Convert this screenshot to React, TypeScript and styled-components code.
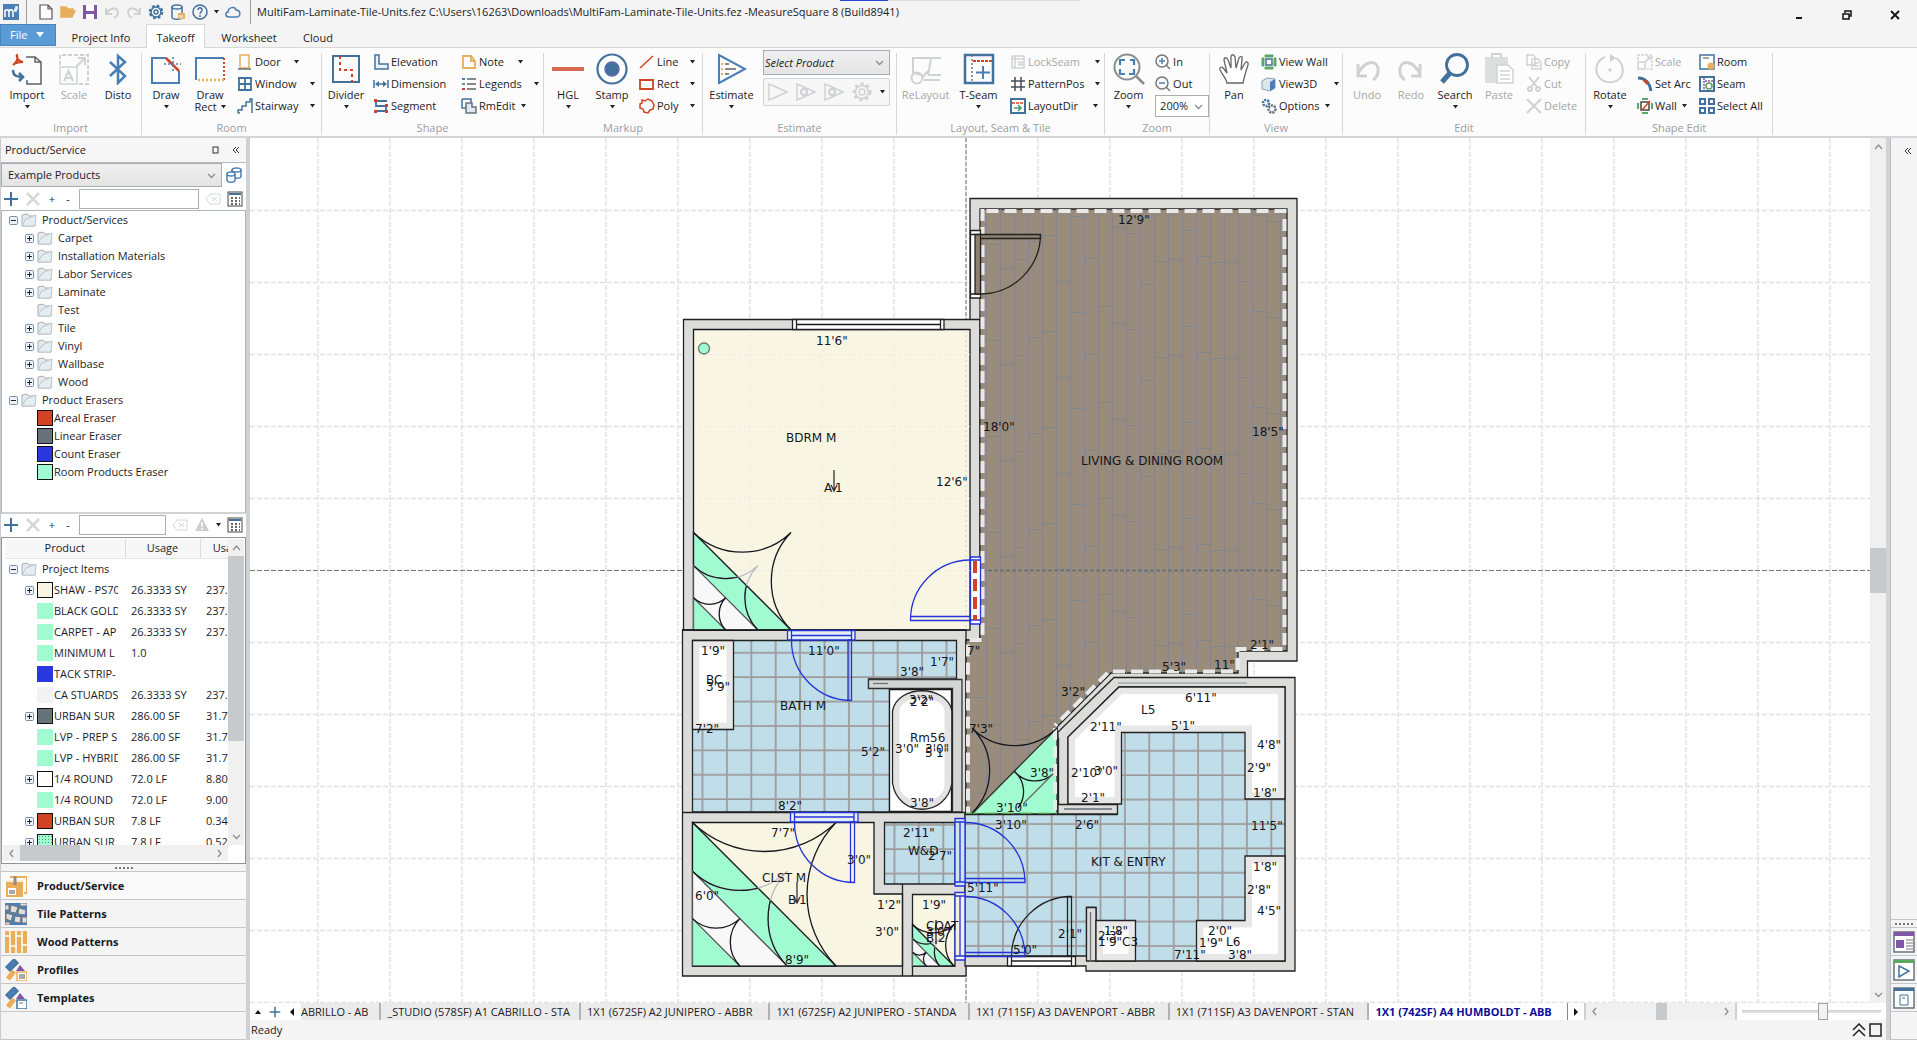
import React from "react";
import styled, { createGlobalStyle, css } from "styled-components";

const font = '"Open Sans", "Noto Sans", sans-serif';
const blue = "#4a7fb5";
const navy = "#41719c";
const sky = "#5b9bd5";
const orange = "#e8ae5c";
const red = "#d04423";
const slate = "#66737a";
const faded = "#cfd2d4";
const mint = "#a0fcd0";
const cream = "#f8f6e2";

const Global = createGlobalStyle`
  * { box-sizing: border-box; }
  body { margin: 0; font-family: ${font}; font-size: 11px; line-height: 16px; color: #1b1b1f; background: #f4f4f4; }
  button, input, select { font: inherit; color: inherit; margin: 0; padding: 0; }
  button { background: none; border: 0; white-space: nowrap; }
  svg { display: block; flex: none; }
`;

/* ---------- shell ---------- */
const Shell = styled.div`
  display: flex; flex-direction: column; height: 100vh; min-height: 700px; overflow: hidden; position: relative;
`;
const Progress = styled.div`
  position: absolute; top: 0; left: 50%; width: 240px; height: 1px; margin-left: -119px;
  background: linear-gradient(90deg, #2a45d8 48px, #dcdcdc 48px);
`;
const TitleBar = styled.header`
  display: flex; align-items: center; height: 24px; padding-left: 3px; flex: none;
`;
const QuickAccess = styled.div`
  display: flex; align-items: center; gap: 6px; height: 24px; padding: 0 9px 0 11px; margin: 0 6px 0 7px;
  border-left: 1px solid #999; border-right: 1px solid #999;
`;
const TitleText = styled.h1`
  font-size: 11px; font-weight: 400; margin: 0; flex: 1; white-space: nowrap;
`;
const WindowButtons = styled.div`
  display: flex; padding-top: 6px;
`;
const WindowButton = styled.button`
  width: 48px; display: flex; justify-content: center;
  &:last-child { margin-right: -2px; }
`;
const Tabs = styled.nav`
  display: flex; height: 24px; flex: none; border-bottom: 1px solid #d6d8da;
`;
const FileTab = styled.button`
  width: 56px; height: 22px; display: flex; align-items: center; gap: 9px; padding-left: 9px;
  color: #fff; background: ${sky}; border: 1px solid #4a83bd;
`;
const RibbonTab = styled.button<{ $w: number; $on?: boolean }>`
  width: ${p => p.$w}px; height: 24px; text-align: center; padding-top: 3px;
  ${p => p.$on && css`background: #fff; border: 1px solid #d6d8da; border-bottom: 0;`}
`;

/* ---------- ribbon ---------- */
const Ribbon = styled.div`
  display: flex; height: 90px; flex: none; background: #fcfcfc; border-bottom: 2px solid #d3d6d8; padding-top: 3px;
`;
const Group = styled.section<{ $w: number }>`
  width: ${p => p.$w}px; height: 82px; margin-top: 2px; border-right: 1px solid #d6d8da;
  display: flex; flex-direction: column;
`;
const GroupBody = styled.div`
  display: flex; height: 67px; padding-left: 2px;
`;
const GroupName = styled.div`
  height: 15px; text-align: center; color: #9a9ea0;
`;
const BigButton = styled.button<{ $w?: number; $off?: boolean }>`
  width: ${p => p.$w || 44}px; display: flex; flex-direction: column; align-items: center; line-height: 12px;
  color: ${p => (p.$off ? "#a5a8aa" : "inherit")};
  & > svg:first-child { margin-bottom: 4px; }
`;
const ArrowRow = styled.span`
  display: flex; align-items: center; gap: 4px; height: 12px;
`;
const Column = styled.div<{ $w?: number }>`
  display: flex; flex-direction: column; width: ${p => (p.$w ? p.$w + "px" : "auto")}; padding-left: 5px; margin-top: -2px;
`;
const SmallButton = styled.button<{ $off?: boolean }>`
  height: 22px; display: flex; align-items: center; gap: 2px;
  color: ${p => (p.$off ? "#a5a8aa" : "inherit")};
`;
const ButtonText = styled.span<{ $w?: number }>`
  min-width: ${p => p.$w || 0}px; text-align: left; margin-right: 3px;
`;
const EstimateTools = styled.div`
  display: flex; flex-direction: column; gap: 3px; margin: -3px 0 0 5px; width: 127px;
`;
const RunBox = styled.div`
  display: flex; align-items: center; justify-content: space-around; height: 28px; border: 1px solid #d0d3d5; border-radius: 2px; background: #f7f7f7;
`;
const SelectWrap = styled.label<{ $h: number; $w?: number; $grey?: boolean; $pad?: number }>`
  display: grid; align-items: center; height: ${p => p.$h}px; width: ${p => (p.$w ? p.$w + "px" : "auto")};
  border: 1px solid #a9adb1; background: ${p => (p.$grey ? "linear-gradient(#f0f0f0, #e4e4e4)" : "#fff")};
  & > select, & > svg { grid-area: 1 / 1; }
  & > svg { justify-self: end; margin-right: 5px; pointer-events: none; }
  & > select { appearance: none; border: 0; background: none; padding-left: ${p => p.$pad || 4}px; height: 100%; min-width: 0; outline: none; }
`;
const ItalicSelect = styled.select`font-style: italic;`;

/* ---------- body ---------- */
const Body = styled.div`
  display: grid; grid-template-columns: 250px minmax(0, 1fr) 27px; flex: 1; min-height: 0;
`;
const Sidebar = styled.aside`
  display: flex; flex-direction: column; min-height: 0; border-left: 1px solid #c8ccd0; border-right: 4px solid #ced2d5; background: #fff;
`;
const PanelHead = styled.div`
  display: flex; align-items: center; height: 25px; padding: 0 6px 0 4px; background: #f6f6f6; flex: none; gap: 12px;
  border-bottom: 1px solid #b4b9bd;
`;
const PanelName = styled.h2`font-size: 11px; font-weight: 400; margin: 0; flex: 1;`;
const ProductPick = styled.div`
  display: grid; grid-template-columns: 1fr 24px; height: 24px; flex: none; align-items: center; justify-items: stretch;
  & > svg { justify-self: center; }
`;
const Tools = styled.div`
  display: flex; align-items: center; height: 23px; padding: 0 3px 0 2px; gap: 6px; flex: none;
`;
const ToolButton = styled.button`min-width: 10px; line-height: 16px; display: flex; justify-content: center;`;
const FilterInput = styled.input`
  flex: 1; min-width: 0; height: 20px; border: 1px solid #aab0b5; background: #fff;
`;
const Tree = styled.ul`
  list-style: none; margin: 0; padding: 0; flex: 304 1 0; min-height: 0; overflow: hidden; border: 1px solid #aeb4b9; border-bottom: 2px solid #d0d3d5;
`;
const TreeRow = styled.li<{ $deep?: boolean }>`
  display: flex; align-items: center; height: 18px; padding-left: ${p => (p.$deep ? 23 : 7)}px; gap: 3px;
`;
const TreeText = styled.span<{ $tight?: boolean }>`margin-left: ${p => (p.$tight ? -2 : 2)}px; white-space: nowrap;`;
const Slot = styled.span`width: 9px; flex: none;`;
const Swatch = styled.span<{ $c: string; $line?: boolean; $dots?: boolean }>`
  width: 16px; height: 16px; flex: none; background-color: ${p => p.$c};
  border: ${p => (p.$line ? "1px solid #111" : "0")};
  ${p => p.$dots && css`background-image: radial-gradient(#4d9c78 25%, transparent 30%); background-size: 3px 3px;`}
`;
const GridBox = styled.div`
  display: grid; grid-template: minmax(0, 1fr) 16px / minmax(0, 1fr) 16px; flex: 326 1 0; min-height: 0;
  border: 1px solid #8f969b; padding: 1px 1px 2px 1px; overflow: hidden;
`;
const TableClip = styled.div`overflow: hidden; min-height: 0; padding-left: 2px;`;
const Items = styled.table`
  border-collapse: collapse; table-layout: fixed; width: 261px;
  th { font-weight: 400; height: 20px; padding: 0; background: #f7f7f7; border-right: 1px solid #dcdcdc; border-bottom: 1px solid #e6e6e6; }
  td { height: 21px; padding: 0 6px; overflow: hidden; white-space: pre; }
  td:first-child { padding: 0 7px 0 3px; }
`;
const Col = styled.col<{ $w: number }>`width: ${p => p.$w}px;`;
const ItemCell = styled.div<{ $deep?: boolean }>`
  display: flex; align-items: center; gap: 3px; padding-left: ${p => (p.$deep ? 17 : 1)}px; overflow: hidden;
`;
const Bar = styled.div<{ $upright?: boolean }>`
  display: flex; flex-direction: ${p => (p.$upright ? "column" : "row")}; background: #f0f0f0; min-width: 0; min-height: 0;
`;
const BarEnd = styled.span`flex: 0 0 17px; display: flex; align-items: center; justify-content: center; align-self: stretch;`;
const BarTrack = styled.span<{ $grow: number }>`flex: ${p => p.$grow} 1 0;`;
const BarThumb = styled.span<{ $grow: number }>`flex: ${p => p.$grow} 1 0; background: #c7cacd;`;
const Grip = styled.div`
  height: 7px; display: flex; gap: 2px; justify-content: center; align-items: center; flex: none; background: #f4f4f4;
  & > i { width: 2px; height: 2px; background: #777; }
`;
const NavButton = styled.button`
  display: flex; align-items: center; gap: 10px; height: 28px; padding-left: 4px; font-weight: 700; flex: none;
  border-top: 1px solid #c3c7ca; background: #f4f4f4; text-align: left;
  &:first-of-type { background: #fafafa; }
`;
const SideFoot = styled.div`height: 29px; flex: none; background: #f4f4f4; border-top: 1px solid #c3c7ca; border-bottom: 1px solid #c3c7ca;`;

const Work = styled.main`display: flex; flex-direction: column; min-width: 0; min-height: 0;`;
const CanvasRow = styled.div`display: flex; flex: 1; min-height: 0; background: #fff; border-right: 4px solid #d0d4d7;`;
const CanvasBox = styled.div`flex: 1; min-width: 0; overflow: hidden;`;
const CanvasBar = styled(Bar)`width: 16px;`;
const SheetRow = styled.div`display: flex; height: 17px; flex: none; background: #fff; border-right: 4px solid #d0d4d7;`;
const SheetTools = styled.div`display: flex; align-items: center; gap: 7px; width: 51px; padding-left: 4px;`;
const Sheets = styled.div`display: flex; flex: 1; min-width: 0;`;
const Sheet = styled.button<{ $grow: number; $on?: boolean }>`
  flex: ${p => p.$grow} 1 0; min-width: 0; padding: 0 6px; text-align: left; line-height: 17px; border-right: 2px solid #aeb3b7;
  background: ${p => (p.$on ? "#fff" : "#ebebeb")};
  & > span { display: block; overflow: hidden; }
  ${p => p.$on && css`color: #0c0c96; font-weight: 700; border-right: 1px solid #888;`}
  &:first-child { padding-left: 0; }
`;
const NextSheet = styled.button`width: 16px; display: flex; align-items: center; justify-content: center;`;
const SheetBar = styled(Bar)`width: 153px; border-left: 2px solid #d0d0d0; border-right: 2px solid #d0d0d0;`;
const SlideBox = styled.label`width: 149px; padding: 0 5px; display: flex; align-items: center;`;
const Slide = styled.input`
  appearance: none; width: 100%; height: 17px; background: linear-gradient(transparent 7px, #cfcfcf 7px, #e6e6e6 10px, transparent 10px);
  &::-webkit-slider-thumb { appearance: none; width: 10px; height: 17px; background: #f2f2f2; border: 1px solid #a0a0a0; }
`;
const Status = styled.footer`
  display: flex; align-items: center; height: 20px; flex: none; padding: 0 3px 0 1px; gap: 3px; background: #f4f4f4; justify-content: space-between;
  border-right: 4px solid #d0d4d7;
`;
const StatusTools = styled.div`display: flex; gap: 3px;`;
const RightRail = styled.aside`
  display: flex; flex-direction: column; background: #f4f4f4; border-left: 1px solid #b9bec2;
`;
const RailHead = styled.button`height: 25px; display: flex; align-items: center; justify-content: center; padding-left: 8px;`;
const RailSpace = styled.div`flex: 1; border-bottom: 1px solid #c3c7ca;`;
const RailButton = styled.button`height: 28px; border-top: 1px solid #c3c7ca; display: flex; align-items: center; justify-content: center;`;
const RailFoot = styled.div`height: 29px; border-top: 1px solid #c3c7ca; border-bottom: 1px solid #c3c7ca;`;

/* ---------- icons ---------- */
const Svg = ({ s = 16, v, h, children }: { s?: number; v?: number; h?: number; children: React.ReactNode }) => (
  <svg width={s} height={h || s} viewBox={`0 0 ${v || s} ${h || v || s}`} fill="none" stroke={navy} strokeWidth="1.5" aria-hidden="true">{children}</svg>
);
const Down = () => <svg width="5" height="4" viewBox="0 0 5 4" aria-hidden="true"><path d="M0 0H5L2.5 3.5Z" fill="#222" /></svg>;
const Chev = ({ d = "down" }: { d?: string }) => {
  const paths: Record<string, string> = { down: "M1 3L4.500 6.500L8 3", up: "M1 7L4.500 3L8 7", left: "M6 1L3 4.500L6 8", right: "M3 1L6 4.500L3 8" };
  return <svg width="9" height="9" viewBox="0 0 9 9" fill="none" stroke="#8a8e91" strokeWidth="1.300" aria-hidden="true"><path d={paths[d]} /></svg>;
};

const Big: Record<string, React.ReactNode> = {
  import: <><path d="M16 27V31H30V9L24 4H15M24 4V9H30" stroke="#5c6166" /><path d="M2 12C6 9 7 5 6 2C5 2 6 8 12 9C9 9 5 9 2 12Z" stroke={red} strokeWidth="2" /><path d="M2 17C2 23 6 24 12 24M8 20L12 24L8 28" stroke={navy} strokeWidth="2.500" /></>,
  scale: <g stroke={faded}><path d="M2 12V2H30V31H20" strokeDasharray="4 2" strokeWidth="2" /><rect x="2" y="14" width="17" height="17" /><path d="M6 28L10.500 18L15 28M8 25H13M18 14L27 5M20 5H27V12" strokeWidth="2" /></g>,
  bluetooth: <path d="M8 9L23 23L16 30V3L23 9L8 23" stroke={blue} strokeWidth="2.500" />,
  draw: <><path d="M16 5H2V30H29V18" stroke={blue} strokeWidth="2" /><path d="M16 5L29 18" stroke={red} strokeWidth="2.500" /><path d="M23 4V18M14 11H31" stroke={blue} strokeDasharray="2 2" /></>,
  drawrect: <><path d="M2 27V5H30" stroke={blue} strokeWidth="2" /><path d="M30 5V27" stroke={red} strokeWidth="2" strokeDasharray="2 2" /><path d="M30 27H2" stroke={orange} strokeWidth="2.500" strokeDasharray="2 2" /></>,
  divider: <><path d="M3 3H29V29H3Z" stroke={navy} strokeWidth="2" /><path d="M10 3V17H22V29" stroke={red} strokeWidth="2" strokeDasharray="3 3" /></>,
  hgl: <path d="M0 16H32" stroke={red} strokeWidth="4" opacity=".8" />,
  stamp: <><circle cx="16" cy="16" r="14.500" stroke={navy} strokeWidth="2.200" /><circle cx="16" cy="16" r="7" fill={navy} stroke="#5c6bb0" /></>,
  estimate: <><path d="M3 2V30L29 16Z" stroke={blue} strokeWidth="2" /><path d="M9 11H13M9 16H20M9 21H13" stroke="#888" strokeWidth="2" /><path d="M5 11H7M5 16H7M5 21H7" stroke={orange} strokeWidth="2" /></>,
  relayout: <g stroke={faded} strokeWidth="2"><path d="M3 20V5H31M21 5C20 12 19 17 18 22M18 22H31" /><circle cx="7" cy="25" r="5.500" /><path d="M12 25L18 18M3 20L12 22M30 27H14" /></g>,
  tseam: <><rect x="2" y="2" width="28" height="28" stroke={navy} strokeWidth="2.500" /><path d="M9 2V30" stroke="#777" strokeDasharray="2 2" /><path d="M10 8H29" stroke={red} strokeDasharray="3 1" strokeWidth="2" /><path d="M20 13V26M13 19.500H27" stroke={blue} strokeWidth="2" /></>,
  zoom: <><circle cx="14" cy="14" r="12.500" stroke="#888d90" strokeWidth="2" /><path d="M23 23L31 31" stroke="#888d90" strokeWidth="2.500" /><path d="M7 12V7H12M17 7H21V12M21 16V21H16M12 21H7V16" stroke={blue} strokeWidth="2.200" /></>,
  pan: <path d="M9 30C8 25 4 21 2 17C1 14 4 13 6 16L9 20L6 7C6 4 9 4 10 7L13 15L13 4C13 1 16 1 17 4L18 15L21 5C22 3 25 3 24 6L23 17L27 10C28 8 31 9 30 12C28 18 26 25 25 30Z" stroke="#666" strokeWidth="1.300" fill="#fff" />,
  undo: <path d="M7 11V23H16M7 21C14 7 25 7 27 15C28 21 25 25 22 27" stroke={faded} strokeWidth="3" />,
  redo: <path d="M25 11V23H16M25 21C18 7 7 7 5 15C4 21 7 25 10 27" stroke={faded} strokeWidth="3" />,
  search: <><circle cx="18" cy="12" r="10.500" stroke={navy} strokeWidth="2.800" /><path d="M11 20L3 29" stroke={navy} strokeWidth="5" /></>,
  paste: <><path d="M2 4H25V30H2Z" fill="#dcdedf" stroke="none" /><path d="M9 5V1H18V5" stroke={faded} strokeWidth="2" /><path d="M14 12H25L30 17V30H14Z" fill="#fff" stroke={faded} /><path d="M17 18H27M17 22H27M17 26H27" stroke={faded} /></>,
  rotate: <><path d="M11 4C2 8 0 17 5 24C10 31 22 31 27 24C31 17 28 9 22 5" stroke={faded} strokeWidth="2" /><path d="M16 1V9L22 5Z" fill={faded} stroke="none" /><circle cx="16" cy="17" r="1" stroke={faded} /></>,
};
const Small: Record<string, React.ReactNode> = {
  door: <><rect x="3" y="1" width="9" height="13" stroke={orange} /><path d="M1 15H14" stroke={slate} /></>,
  window: <path d="M2 2H14V14H2ZM8 2V14M2 8H14" strokeWidth="1.800" />,
  stairs: <path d="M1 15V12H5V8H9V4H13V1H15V15M3 15H1" />,
  elev: <path d="M2 1H6V10H15V15H2Z" fill="#e8f1f8" />,
  dim: <><path d="M1 4V12M15 4V12M6 8H10" /><path d="M2 8L6 5V11ZM14 8L10 5V11Z" fill={navy} stroke="none" /></>,
  seg: <><path d="M3 3H14M3 3V8H13V13H3" strokeWidth="1.800" /><path d="M1 1H4V4H1ZM12 6H15V9H12ZM1 12H4V15H1ZM12 12H15V15H12Z" fill={red} stroke="none" /></>,
  note: <path d="M2 2H10L14 7V14H2ZM10 2V7H14" stroke={orange} strokeWidth="1.800" />,
  legends: <><path d="M6 3H15M6 8H15M6 13H15" stroke="#888" strokeWidth="2" /><path d="M1 2H4V4H1Z" fill={blue} stroke="none" /><path d="M1 7H4V9H1Z" fill="#58a860" stroke="none" /><path d="M1 12H4V14H1Z" fill={red} stroke="none" /></>,
  rmedit: <><path d="M1 1H10V5M5 10H1V1" /><path d="M5 5H11V9H15V15H5Z" stroke={slate} fill="#dfe8ee" /></>,
  line: <path d="M1 14L14 2" stroke={red} />,
  rect: <path d="M1 4H14V13H1Z" stroke={red} strokeWidth="1.800" />,
  poly: <path d="M3 2L6 3L9 1L13 3L15 7L14 11L11 12L9 15L5 14L4 11L1 10L1 6L3 5Z" stroke={red} />,
  lock: <><path d="M2 2H14V14H2ZM2 5H14M5 2V14M9 8H12V11H9Z" stroke={faded} /></>,
  hash: <path d="M5 1V15M11 1V15M1 5H15M1 11H15" stroke="#444e58" />,
  layoutdir: <><rect x="1" y="1" width="14" height="14" strokeWidth="2" /><path d="M2 5H14" stroke={red} strokeDasharray="3 1" /><path d="M4 10H10M8 7L11 10L8 13" stroke="#469a68" /></>,
  zin: <><circle cx="7" cy="7" r="6" stroke="#777" /><path d="M11 11L15 15" stroke="#777" /><path d="M4 7H10M7 4V10" stroke={blue} /></>,
  zout: <><circle cx="7" cy="7" r="6" stroke="#777" /><path d="M11 11L15 15" stroke="#777" /><path d="M4 7H10" stroke={blue} /></>,
  vwall: <><rect x="5" y="5" width="6" height="6" /><path d="M4 1H12V3H4ZM4 13H12V15H4ZM1 4H3V12H1ZM13 4H15V12H13Z" fill="#5aa864" stroke="#5aa864" strokeWidth="1" /></>,
  v3d: <><path d="M1 5L6 2L14 3V12L9 15L1 13Z" fill="#dbe6ef" stroke="#8ba0b1" strokeWidth="1" /><path d="M9 6L14 3V12L9 15Z" fill={blue} stroke="none" /></>,
  gears: <><circle cx="5" cy="5" r="3" strokeDasharray="2 1" strokeWidth="2.500" /><circle cx="11" cy="11" r="3.500" stroke="#5c6a78" strokeDasharray="2 1" strokeWidth="2.500" /></>,
  copy: <g stroke={faded}><path d="M1 1H7L9 3V11H1ZM6 5H12L15 8V15H6Z" fill="#fff" /><path d="M8 9H13M8 12H13" /></g>,
  cut: <g stroke={faded} strokeWidth="2"><path d="M3 1L11 11M13 1L5 11" /><circle cx="4" cy="13" r="2" /><circle cx="12" cy="13" r="2" /></g>,
  del: <path d="M1 1L15 15M15 1L1 15" stroke={faded} strokeWidth="2" />,
  scale: <g stroke={faded}><path d="M1 6V1H15V15H10" strokeDasharray="3 1" /><path d="M1 8H8V15H1ZM8 8L13 3M10 3H13V6" /></g>,
  arc: <><path d="M1 2C9 2 13 8 14 15" strokeWidth="3" /><path d="M7 4L11 8" stroke={red} strokeWidth="3" /></>,
  wall: <><path d="M4 4H12V12H4Z" stroke="#444" /><path d="M5 1H11M5 15H11M1 5V11M15 5V11" stroke="#5aa864" strokeWidth="2" /><path d="M5 12L13 3" stroke={red} /></>,
  room: <><path d="M1 1H15V15H1Z" strokeWidth="1.500" fill="#fff" /><path d="M4 4H10" stroke="#888" /><circle cx="12" cy="12" r="3.500" fill={orange} stroke="none" /></>,
  seam: <><path d="M1 1H15V15H1Z" strokeWidth="2" /><path d="M5 2V14M6 5H14" stroke="#8156a6" strokeDasharray="2 1" /><circle cx="10" cy="10" r="3" stroke="#5aa864" /></>,
  all: <path d="M1 1H6V6H1ZM10 1H15V6H10ZM1 10H6V15H1ZM10 10H15V15H10Z" strokeWidth="2" />,
  plus: <path d="M8 1V15M1 8H15" strokeWidth="2" />,
  x: <path d="M2 2L14 14M14 2L2 14" stroke="#d5d7d8" strokeWidth="2.500" />,
  clear: <path d="M1 8L5 3H15V13H5ZM7 6L12 10M12 6L7 10" stroke="#d5d7d8" strokeWidth="1" />,
  warn: <><path d="M8 1L15 14H1Z" fill="#cbcdce" stroke="none" /><path d="M8 5V10M8 11V13" stroke="#fff" /></>,
  table: <><rect x="1" y="1" width="14" height="14" stroke="#444" strokeWidth="1" /><path d="M2 3H14" stroke={navy} strokeWidth="2" /><path d="M4 7H13M4 10H13M4 13H13" stroke="#333" strokeDasharray="2 2" /></>,
  dbs: <g stroke={blue} fill="#fff" strokeWidth="1.500"><path d="M6 3V9C6 12 15 12 15 9V3" /><ellipse cx="10.500" cy="3" rx="4.500" ry="2" /><path d="M1 7V13C1 16 9 16 9 13V7" /><ellipse cx="5" cy="7" rx="4" ry="2" /></g>,
  folder: <><path d="M1 14V3L6 2L8 4H14V14Z" fill="#e6eaec" stroke="#a9aeb2" strokeWidth="1" /><path d="M1 14L5 7L15 3L14 14Z" fill="#e3edf2" stroke="#bcc6cc" strokeWidth="1" /></>,
  file: <path d="M2 1H10L14 5V15H2ZM10 1V5H14" stroke="#555" strokeWidth="1.200" fill="#fff" />,
  open: <path d="M1 13V3H6L8 5H13V7M1 13L4 7H15L12 13Z" fill={orange} stroke={orange} />,
  save: <><path d="M1 1H15V15H1Z" fill="#8156a6" stroke="none" /><path d="M4 1H12V7H4ZM4 10H12V15H4Z" fill="#fff" stroke="none" /></>,
  undo: <path d="M2 4V10H8M2 10C6 3 13 3 14 8C14 11 12 13 10 14" stroke={faded} strokeWidth="2" />,
  redo: <path d="M14 4V10H8M14 10C10 3 3 3 2 8C2 11 4 13 6 14" stroke={faded} strokeWidth="2" />,
  gear: <><circle cx="8" cy="8" r="6" strokeDasharray="2.700 2" strokeWidth="2.500" /><circle cx="8" cy="8" r="5" /><circle cx="8" cy="8" r="2" /></>,
  db: <><path d="M2 3V13C2 16 12 16 12 13V3" /><ellipse cx="7" cy="3" rx="5" ry="2" /><path d="M8 9H15V15H8Z" fill={orange} stroke="none" /><path d="M10 11V14M12 11V14" stroke="#fff" strokeWidth="1" /></>,
  help: <><circle cx="8" cy="8" r="7" /><path d="M6 6C6 3 10 3 10 6C10 8 8 8 8 10M8 11V13" /></>,
  cloud: <path d="M4 13C0 13 0 8 3 8C3 3 10 2 11 6C16 6 16 13 12 13Z" stroke={blue} />,
};
const I = ({ n, s = 16 }: { n: string; s?: number }) => <Svg s={s} v={16}>{Small[n]}</Svg>;
const L = ({ n }: { n: string }) => <Svg s={32}>{Big[n]}</Svg>;
const Expander = ({ open }: { open?: boolean }) => (
  <svg width="9" height="9" viewBox="0 0 9 9" fill="#eef4fb" stroke="#7c8fa8" aria-hidden="true">
    <rect x=".5" y=".5" width="8" height="8" rx="1" /><path d={open ? "M2 4.500H7" : "M2 4.500H7M4.500 2V7"} stroke="#222" />
  </svg>
);
const Navs: [string, React.ReactNode][] = [
  ["Product/Service", <><path d="M5 2H22V18H19" stroke={orange} strokeWidth="2" /><path d="M1 5H18V22H1Z" fill={orange} stroke="none" /><path d="M1 6H19" stroke="#fff" /><path d="M10 1V10" stroke="#9a8a7a" strokeWidth="3" /><path d="M3 13H11V20H3Z" fill="#fff" stroke="none" /><path d="M5 15V19M7 15V19M9 15V19" stroke="#555" strokeWidth="1" /></>],
  ["Tile Patterns", <><path d="M0 0H22V22H0Z" fill={blue} stroke="none" /><path d="M6 2L13 4L11 10L5 9ZM14 5L21 7L20 12L13 11ZM1 10L8 12L6 18L1 16ZM10 13L16 14L15 20L9 19ZM17 14H22V20H17ZM0 2H4V7H0ZM0 19H5V22H0ZM15 0H22V3H15Z" fill="#dcdedf" stroke="#777" strokeWidth="1" /></>],
  ["Wood Patterns", <><path d="M0 0H22V22H0Z" fill={orange} stroke="none" /><path d="M5 0V22M11 0V22M17 0V22M0 5H5M5 15H11M11 5H17M17 14H22" stroke="#fff" /></>],
  ["Profiles", <><path d="M1 8L9 0L13 4L5 12Z" fill={blue} stroke={navy} /><path d="M11 12L15 6L20 12Z" fill="#8156a6" stroke="none" /><path d="M3 20L9 12" stroke={orange} strokeWidth="5" /><path d="M12 13H22V22H12Z" fill="#fff" stroke={orange} /><path d="M15 15V20M17 15V20M19 15V20" stroke="#555" strokeWidth="1" /></>],
  ["Templates", <><path d="M1 8L9 0L13 4L5 12Z" fill={blue} stroke={navy} /><path d="M11 12L15 6L20 12Z" fill="#8156a6" stroke="none" /><path d="M3 20L9 12" stroke={orange} strokeWidth="5" /><path d="M12 13H22V22H12Z" fill="#fff" stroke={navy} /><path d="M14 16H18" stroke="#777" strokeWidth="1" /></>],
];

/* ---------- ribbon pieces ---------- */
const BigB = ({ n, t, w, off, arrow, t2 }: { n: string; t: string; w?: number; off?: boolean; arrow?: boolean; t2?: string }) => (
  <BigButton $w={w} $off={off}>
    <L n={n} /><span>{t}</span>
    {(arrow || t2) && <ArrowRow>{t2}<Down /></ArrowRow>}
  </BigButton>
);
const SmallB = ({ n, t, w, off, arrow }: { n: string; t: string; w?: number; off?: boolean; arrow?: boolean }) => (
  <SmallButton $off={off}><I n={n} /><ButtonText $w={w}>{t}</ButtonText>{arrow && <Down />}</SmallButton>
);

/* ---------- floor plan ---------- */
const PlanText = styled.text`font-family: "DejaVu Sans", sans-serif; font-size: 12px; fill: #15151c; stroke: none;`;
const labels: [string, number, number][] = [
  ["11'6\"", 816, 341], ["BDRM M", 786, 438], ["A", 824, 488], ["1", 835, 488], ["12'6\"", 936, 482],
  ["1'9\"", 701, 651], ["BC", 706, 680], ["3'9\"", 706, 687], ["11'0\"", 808, 651], ["1'7\"", 930, 662], ["3'8\"", 900, 672],
  ["BATH M", 780, 706], ["7'2\"", 695, 729], ["5'2\"", 861, 752], ["8'2\"", 778, 806], ["3'2\"", 909, 700], ["2'2\"", 910, 702],
  ["Rm56", 910, 738], ["3'0\"", 895, 749], ["3'0\"", 925, 749], ["5'1\"", 925, 753], ["3'8\"", 910, 803], ["7'7\"", 771, 833],
  ["2'11\"", 903, 833], ["W&D", 908, 851], ["2'7\"", 928, 856], ["3'0\"", 847, 860], ["CLST M", 762, 878], ["6'0\"", 695, 896],
  ["B", 788, 900], ["1", 799, 900], ["1'2\"", 877, 905], ["1'9\"", 922, 905], ["3'0\"", 875, 932], ["COAT", 926, 926],
  ["3'0\"", 926, 932], ["B 2", 926, 938], ["8'9\"", 785, 960], ["7\"", 967, 651], ["12'9\"", 1118, 220], ["18'0\"", 983, 427],
  ["18'5\"", 1252, 432], ["LIVING & DINING ROOM", 1081, 461], ["2'1\"", 1250, 645], ["5'3\"", 1162, 667], ["11\"", 1214, 665],
  ["3'2\"", 1061, 692], ["6'11\"", 1185, 698], ["L5", 1141, 710], ["2'11\"", 1090, 727], ["5'1\"", 1171, 726], ["7'3\"", 969, 729],
  ["4'8\"", 1257, 745], ["2'9\"", 1247, 768], ["2'10\"", 1071, 773], ["3'0\"", 1094, 771], ["3'8\"", 1030, 773], ["1'8\"", 1253, 793],
  ["2'1\"", 1081, 798], ["3'10\"", 996, 808], ["3'10\"", 995, 825], ["2'6\"", 1075, 825], ["11'5\"", 1251, 826], ["KIT & ENTRY", 1091, 862],
  ["1'8\"", 1253, 867], ["5'11\"", 967, 888], ["2'8\"", 1247, 890], ["4'5\"", 1257, 911], ["2'1\"", 1058, 934], ["1'8\"", 1104, 931],
  ["2'3\"", 1098, 936], ["1'9\"", 1098, 942], ["C3", 1122, 942], ["5'0\"", 1013, 950], ["2'0\"", 1208, 931], ["1'9\"", 1199, 943],
  ["L6", 1226, 942], ["7'11\"", 1174, 955], ["3'8\"", 1228, 955],
];
const joints = [217, 244, 268, 259, 241, 235, 281, 216, 258, 210, 227, 233, 284, 261, 259, 230, 256, 262, 262, 281, 215, 221];
const livingFloor = "M980 209H1287V651H1238V673H1111L1057 727V814H966V640H980Z";
const L5 = "M1119 687H1285V799H1245V732.500H1121.500V804H1068V737Z";
const L6 = "M1245 856H1285V961H1196.500V920.500H1245Z";

const Tile = ({ id, x, y }: { id: string; x: number; y: number }) => (
  <pattern id={id} width="24.400" height="24.400" patternUnits="userSpaceOnUse" patternTransform={`translate(${x - 1} ${y - 1})`}>
    <rect width="25" height="25" fill="#c0dee9" /><path d="M0 1H24.400M1 0V24.400" stroke="#9d9897" strokeWidth="1.700" />
  </pattern>
);
const Counter = ({ d, id }: { d: string; id: string }) => (
  <g>
    <clipPath id={id}><path d={d} /></clipPath>
    <path d={d} fill="#fff" stroke="#e7e7e7" strokeWidth="14" clipPath={`url(#${id})`} />
    <path d={d} stroke="#222" />
  </g>
);
const Roll = ({ x, y, s }: { x: number; y: number; s: number }) => {
  const e = x + s, b = y + s, m = s * 0.66, k = s * 0.33;
  const web = (t: number, c = "#181820") => {
    const top = b - t;
    return <path d={`M${x} ${top}A${t * 0.72} ${t * 0.72} 0 0 0 ${x + t} ${top}A${t * 0.72} ${t * 0.72} 0 0 0 ${x + t} ${b}`} stroke={c} />;
  };
  return (
    <g>
      <path d={`M${x} ${y}L${e} ${b}H${x}Z`} fill={mint} stroke="#181820" />
      {web(m, "#b9bcc4")}
      <clipPath id={`roll${x}`}><path d={`M${x} ${y}L${e} ${b}H${x}Z`} /></clipPath>
      <g clipPath={`url(#roll${x})`}>
        <path d={`M${x} ${b - m}L${x + m} ${b}H${x}Z`} fill="#f8f8f8" stroke="#555" />
        {web(m)}
        <path d={`M${x} ${b - k}L${x + k} ${b}H${x}Z`} fill={mint} stroke="#555" />
      </g>
      {web(k)}
      {web(s)}
    </g>
  );
};

const Plan = () => (
  <svg width="100%" height="100%" role="img" aria-label="Floor plan">
    <defs>
      <Tile id="bathTile" x={702.5} y={652.7} />
      <Tile id="kitTile" x={978.5} y={750.7} />
      <Tile id="wdTile" x={894.5} y={824.7} />
      <clipPath id="livingClip"><path d={livingFloor} /></clipPath>
    </defs>
    <g transform="translate(-250 -138)" fill="none" strokeWidth="1.300">
      <g stroke="#e2e2e2" strokeDasharray="5 2" strokeWidth="1.500">
        {Array.from({ length: 24 }, (_, i) => <path key={i} d={`M${318 + i * 72} 138V1010`} />)}
        {Array.from({ length: 12 }, (_, i) => <path key={i} d={`M250 ${210.500 + i * 72}H2000`} />)}
      </g>
      <path d="M966 138V1010" stroke="#8d939b" strokeDasharray="4 2" />
      <path d="M250 570.500H2000" stroke="#85796d" strokeDasharray="5 2" strokeWidth="1" />

      {/* walls */}
      <g fill="#dcdcda" stroke="#222">
        <path d="M970 198.500H1297V661H1247.500V683H1114L1058 740V814H966V640H970Z" />
        <path d="M683.500 319.500H980V640H683.500Z" />
        <path d="M682.500 630H966V976H682.500Z" />
        <path d="M1114 677.500H1295V971H1086V966H965V814H1058V732Z" />
      </g>

      {/* living room */}
      <path d={livingFloor} fill="#998c7c" stroke="#222" />
      <g clipPath="url(#livingClip)">
        <g stroke="#82868a" strokeWidth="1">
          {joints.map((y, i) => (
            <path key={i} d={`M${986.500 + i * 14} 200V820` + Array.from({ length: 7 }, (_, k) => `M${972.500 + i * 14} ${y + k * 96 + 0.500}h14`).join("")} />
          ))}
        </g>
        <path d="M250 570.500H2000" stroke="#5f6c75" strokeDasharray="4 2" />
      </g>
      <path d="M1057 728V814H972Z" fill={mint} stroke="#333" />
      <g stroke="#e9e9e9" strokeWidth="4" strokeDasharray="12 6">
        <path d="M986.500 211H1284.500V649H1237.500V671.500H1109L1055 725.500" /><path d="M1055 728V810" />
        <path d="M982.500 209V640H968V814" />
      </g>
      <path d="M966 813.500H1057" stroke="#63c25f" strokeWidth="2" strokeDasharray="12 6" />
      <g stroke="#181820">
        <path d="M972 728A60 60 0 0 0 1057 728M972 728A60 60 0 0 1 972 813M1014 771A27 27 0 0 0 1053 774M1014 771A27 27 0 0 1 1018 808" />
        <path d="M1053 774L1024 803" stroke="#666" />
      </g>

      {/* bedroom */}
      <path d="M693.500 329.500H970V630H693.500Z" fill={cream} stroke="#181820" />
      <g stroke="#e6e6ea" strokeWidth="1" strokeDasharray="2 3">
        <path d="M750 330V630M822 330V630M894 330V630M694 354.500H970M694 426.500H970M694 498.500H970M694 570.500H970" />
        <path d="M966 330V630" stroke="#c9cdda" />
      </g>
      <circle cx="704" cy="348.500" r="5.500" fill={mint} stroke={slate} />
      <Roll x={693.5} y={532.5} s={97.500} />
      <path d="M834 470V490M831 485L834 491L837 485" stroke="#333" />
      <path d="M792.500 319.500H944V329.500H792.500ZM796.500 319.500V329.500M940.500 319.500V329.500" fill="#fff" stroke="#222" />
      <path d="M797 324.500H940M682 630H966" stroke="#181820" />

      {/* bath */}
      <path d="M692.500 640.500H956.500V679H868.500V688H889.500V812H692.500Z" fill="url(#bathTile)" stroke="#222" />
      <Counter id="bc" d="M692.500 640.500H733.500V729.500H692.500Z" />
      <path d="M868.500 679.500H962V812H952.500V688.500H868.500Z" fill="#d3d4d4" stroke="#333" />
      <path d="M873 683.500H888" stroke={slate} />
      <path d="M889.500 689.500H951.500V811.500H889.500Z" fill="#fff" stroke="#181820" />
      <path d="M896 711C896 700 910 694.500 921.500 694.500S948 700 948 711V785C948 798 933 805.500 921.500 805.500S896 798 896 785Z" stroke="#e3e3e3" strokeWidth="7" />
      <path d="M892.500 711C898 684 946 684 952 711V783C946 818 898 818 892.500 783Z" stroke="#222" />

      {/* closets */}
      <path d="M682 812.500H966" stroke="#222" />
      <path d="M692.500 822.500H874V894H902.500V966H692.500Z" fill={cream} stroke="#181820" />
      <Roll x={692.5} y={822.5} s={143.500} />
      <path d="M797 882V902M794 897L797 903L800 897" stroke="#333" />
      <path d="M884.500 822.500H955V884H884.500Z" fill="url(#wdTile)" stroke="#222" />
      <path d="M912.500 894.500H955V966H912.500Z" fill={cream} stroke="#222" />
      <Roll x={912.5} y={924.5} s={41.500} />
      <path d="M902.500 884V976M912.500 966V976M936 920V944" stroke="#222" />

      {/* kitchen */}
      <path d="M965 814.500H1117V804H1068V737L1119 687H1285V961H1096V907.500H1086.500V956H965Z" fill="url(#kitTile)" stroke="#222" />
      <path d="M1086.500 907.500H1096V961H1086.500Z" fill="#dcdcda" stroke="#222" />
      <path d="M1058 804.500H1117.500V814H1058Z" fill="#dcdcda" stroke="#222" />
      <path d="M1064 809H1112M1090.500 912V961" stroke={slate} />
      <Counter id="l5" d={L5} /><Counter id="l6" d={L6} /><Counter id="c3" d="M1096 920.500H1135.500V961H1096Z" />
      <path d="M1058.500 738V804" stroke="#222" />
      <path d="M1118 683H1247" stroke="#8a9096" strokeWidth="1" />

      {/* doors */}
      <g stroke="#222">
        <path d="M970.500 230.500H980.500V298H970.500ZM970.500 234.500H980.500M970.500 294H980.500" fill="#fff" />
        <path d="M975 234.500H980.500V294H975ZM980.500 234.500H1040.500V238.500H980.500Z" fill="#8d8172" />
        <path d="M1040.500 234.500A60 60 0 0 1 980.500 294" />
        <path d="M1007.500 956.500H1075.500V966H1007.500ZM1011.500 956.500V966M1071.500 956.500V966M1012 961H1071" fill="#fff" />
        <path d="M1067.500 896.500H1071.500V956H1067.500ZM1071.500 896.500A60 60 0 0 0 1011.500 956" />
      </g>
      <g stroke="#2433d8">
        <path d="M970.500 557H980.500V624H970.500ZM970.500 560H980.500M970.500 620H980.500" fill="#fff" />
        <path d="M970 560A60 60 0 0 0 910.500 620.500H970M911 616.500H970" />
        <path d="M787.500 630.500H855V640H787.500ZM791.500 630.500V640M851.500 630.500V640M792 635.500H851" fill="#e4f0f6" />
        <path d="M848 640H851.500V700.500H848ZM791.500 640A60 60 0 0 0 851.500 700.500" />
        <path d="M790.500 812.500H858V822H790.500ZM794.500 812.500V822M854 812.500V822M795 817H854" fill="#e4f0f6" />
        <path d="M850.500 822H854.500V882.500H850.500ZM794.500 822A60 60 0 0 0 854.500 882.500" />
        <path d="M955 818.500H965V886H955ZM955 822H965M955 882H965M960 822V882" fill="#cfe3ee" />
        <path d="M965 878.500H1025V882.500H965M965 822.500A60 60 0 0 1 1025 882" />
        <path d="M955 892.500H965V960H955ZM955 896H965M955 956H965M960 896V956" fill="#f1f0e6" />
        <path d="M965 952.500H1025V956.500H965M965 896.500A60 60 0 0 1 1025 956" />
      </g>
      <path d="M975 561V620" stroke={red} strokeWidth="4" strokeDasharray="12 6" />
      {labels.map(([t, x, y], i) => <PlanText key={i} x={x} y={y + 4}>{t}</PlanText>)}
    </g>
  </svg>
);

/* ---------- data ---------- */
const folders = ["Carpet", "Installation Materials", "Labor Services", "Laminate", "Test", "Tile", "Vinyl", "Wallbase", "Wood"];
const erasers: [string, string][] = [["Areal Eraser", red], ["Linear Eraser", slate], ["Count Eraser", "#2838dc"], ["Room Products Eraser", mint]];
const items: [string, string, string, string, string][] = [
  ["SHAW - PS700", "26.3333 SY", "237.00", cream, "+l"],
  ["BLACK GOLD", "26.3333 SY", "237.00", mint, ""],
  ["CARPET - AP", "26.3333 SY", "237.00", mint, ""],
  ["MINIMUM L", "1.0", "", mint, ""],
  ["TACK STRIP-", "", "", "#2838dc", ""],
  ["CA STUARDS", "26.3333 SY", "237.00", "#f3f3f3", ""],
  ["URBAN SUR", "286.00 SF", "31.78", slate, "+l"],
  ["LVP - PREP  S", "286.00 SF", "31.78", mint, ""],
  ["LVP - HYBRID", "286.00 SF", "31.78", mint, ""],
  ["1/4 ROUND ", "72.0 LF", "8.80", "#fff", "+l"],
  ["1/4 ROUND ", "72.0 LF", "9.00", mint, ""],
  ["URBAN SUR", "7.8 LF", "0.34", red, "+l"],
  ["URBAN SUR", "7.8 LF", "0.52", mint, "+ld"],
];
const sheets: [string, number][] = [
  ["ABRILLO - AB", 78], ["_STUDIO (578SF) A1 CABRILLO - STA", 200], ["1X1 (672SF) A2 JUNIPERO - ABBR", 189],
  ["1X1 (672SF) A2 JUNIPERO - STANDA", 200], ["1X1 (711SF) A3 DAVENPORT - ABBR", 200], ["1X1 (711SF) A3 DAVENPORT - STAN", 200],
];
const Dots = () => <Grip>{[0, 1, 2, 3, 4].map(i => <i key={i} />)}</Grip>;

export default function App() {
  return (
    <>
      <Global />
      <Shell>
        <Progress />
        <TitleBar>
          <svg width="16" height="16" viewBox="0 0 16 16" aria-hidden="true"><rect width="16" height="16" fill={blue} /><path d="M2 13V6M2 8C2 5 6 5 6 8V13M6 8C6 5 10 5 10 8V13M12 3H14V5H12V7H14" stroke="#fff" strokeWidth="1.500" fill="none" /></svg>
          <QuickAccess>
            {["file", "open", "save", "undo", "redo", "gear", "db", "help"].map(n => <button key={n} aria-label={n}><I n={n} /></button>)}
            <Down />
            <button aria-label="cloud"><I n="cloud" /></button>
          </QuickAccess>
          <TitleText>MultiFam-Laminate-Tile-Units.fez C:\Users\16263\Downloads\MultiFam-Laminate-Tile-Units.fez -MeasureSquare 8 (Build8941)</TitleText>
          <WindowButtons>
            <WindowButton aria-label="Minimize"><Svg s={10}><path d="M2 8H8" stroke="#111" strokeWidth="2" /></Svg></WindowButton>
            <WindowButton aria-label="Restore"><Svg s={10}><path d="M3 3V1H9V6H7M1 4H7V9H1Z" stroke="#111" /></Svg></WindowButton>
            <WindowButton aria-label="Close"><Svg s={10}><path d="M1 1L9 9M9 1L1 9" stroke="#111" strokeWidth="1.800" /></Svg></WindowButton>
          </WindowButtons>
        </TitleBar>
        <Tabs>
          <FileTab>File <svg width="8" height="6" viewBox="0 0 8 6" aria-hidden="true"><path d="M0 0H8L4 5Z" fill="#fff" /></svg></FileTab>
          <RibbonTab $w={90}>Project Info</RibbonTab>
          <RibbonTab $w={59} $on>Takeoff</RibbonTab>
          <RibbonTab $w={88}>Worksheet</RibbonTab>
          <RibbonTab $w={50}>Cloud</RibbonTab>
        </Tabs>
        <Ribbon>
          <Group $w={142}>
            <GroupBody>
              <BigB n="import" t="Import" arrow w={50} /><BigB n="scale" t="Scale" off /><BigB n="bluetooth" t="Disto" />
            </GroupBody><GroupName>Import</GroupName>
          </Group>
          <Group $w={180}>
            <GroupBody>
              <BigB n="draw" t="Draw" arrow /><BigB n="drawrect" t="Draw" t2="Rect" />
              <Column><SmallB n="door" t="Door" w={34} arrow /><SmallB n="window" t="Window" w={50} arrow /><SmallB n="stairs" t="Stairway" w={50} arrow /></Column>
            </GroupBody><GroupName>Room</GroupName>
          </Group>
          <Group $w={222}>
            <GroupBody>
              <BigB n="divider" t="Divider" arrow />
              <Column $w={88}><SmallB n="elev" t="Elevation" /><SmallB n="dim" t="Dimension" /><SmallB n="seg" t="Segment" /></Column>
              <Column><SmallB n="note" t="Note" w={34} arrow /><SmallB n="legends" t="Legends" w={50} arrow /><SmallB n="rmedit" t="RmEdit" arrow /></Column>
            </GroupBody><GroupName>Shape</GroupName>
          </Group>
          <Group $w={159}>
            <GroupBody>
              <BigB n="hgl" t="HGL" arrow /><BigB n="stamp" t="Stamp" arrow />
              <Column><SmallB n="line" t="Line" w={28} arrow /><SmallB n="rect" t="Rect" w={28} arrow /><SmallB n="poly" t="Poly" w={28} arrow /></Column>
            </GroupBody><GroupName>Markup</GroupName>
          </Group>
          <Group $w={194}>
            <GroupBody>
              <BigB n="estimate" t="Estimate" w={53} arrow />
              <EstimateTools>
                <SelectWrap $h={25} $grey $pad={1}><ItalicSelect aria-label="Product"><option>Select Product</option></ItalicSelect><Chev /></SelectWrap>
                <RunBox>
                  {[0, 1, 2].map(i => <button key={i} aria-label="Run"><Svg s={20}><path d="M1 2V18L19 10Z" stroke={faded} />{i > 0 && <circle cx="8" cy="10" r="3" stroke={faded} strokeWidth="2" />}</Svg></button>)}
                  <button aria-label="Run settings"><Svg s={20}><g stroke={faded}><circle cx="10" cy="10" r="8" strokeDasharray="3 3" strokeWidth="3" /><circle cx="10" cy="10" r="6.500" /><circle cx="10" cy="10" r="3" /></g></Svg></button>
                  <Down />
                </RunBox>
              </EstimateTools>
            </GroupBody><GroupName>Estimate</GroupName>
          </Group>
          <Group $w={208}>
            <GroupBody>
              <BigB n="relayout" t="ReLayout" w={53} off /><BigB n="tseam" t="T-Seam" w={53} arrow />
              <Column><SmallB n="lock" t="LockSeam" w={62} off arrow /><SmallB n="hash" t="PatternPos" w={62} arrow /><SmallB n="layoutdir" t="LayoutDir" w={60} arrow /></Column>
            </GroupBody><GroupName>Layout, Seam &amp; Tile</GroupName>
          </Group>
          <Group $w={105}>
            <GroupBody>
              <BigB n="zoom" t="Zoom" arrow />
              <Column $w={60}><SmallB n="zin" t="In" /><SmallB n="zout" t="Out" /><SelectWrap $h={22}><select aria-label="Zoom level"><option>200%</option></select><Chev /></SelectWrap></Column>
            </GroupBody><GroupName>Zoom</GroupName>
          </Group>
          <Group $w={133}>
            <GroupBody>
              <BigB n="pan" t="Pan" />
              <Column><SmallB n="vwall" t="View Wall" /><SmallB n="v3d" t="View3D" w={50} arrow /><SmallB n="gears" t="Options" arrow /></Column>
            </GroupBody><GroupName>View</GroupName>
          </Group>
          <Group $w={243}>
            <GroupBody>
              <BigB n="undo" t="Undo" off /><BigB n="redo" t="Redo" off /><BigB n="search" t="Search" arrow /><BigB n="paste" t="Paste" off />
              <Column><SmallB n="copy" t="Copy" off /><SmallB n="cut" t="Cut" off /><SmallB n="del" t="Delete" off /></Column>
            </GroupBody><GroupName>Edit</GroupName>
          </Group>
          <Group $w={187}>
            <GroupBody>
              <BigB n="rotate" t="Rotate" arrow />
              <Column $w={62}><SmallB n="scale" t="Scale" off /><SmallB n="arc" t="Set Arc" /><SmallB n="wall" t="Wall" arrow /></Column>
              <Column><SmallB n="room" t="Room" /><SmallB n="seam" t="Seam" /><SmallB n="all" t="Select All" /></Column>
            </GroupBody><GroupName>Shape Edit</GroupName>
          </Group>
        </Ribbon>

        <Body>
          <Sidebar>
            <PanelHead>
              <PanelName>Product/Service</PanelName>
              <Svg s={8}><rect x="1" y="1" width="5" height="6" stroke="#333" strokeWidth="1" /></Svg>
              <Svg s={8}><path d="M4 1L1 4L4 7M7 1L4 4L7 7" stroke="#333" strokeWidth="1" /></Svg>
            </PanelHead>
            <ProductPick>
              <SelectWrap $h={24} $grey $pad={6}><select aria-label="Product library"><option>Example Products</option></select><Chev /></SelectWrap>
              <I n="dbs" />
            </ProductPick>
            <Tools>
              <ToolButton aria-label="Add"><I n="plus" /></ToolButton><ToolButton aria-label="Remove"><I n="x" /></ToolButton>
              <ToolButton>+</ToolButton><ToolButton>-</ToolButton><FilterInput aria-label="Filter products" />
              <ToolButton aria-label="Clear"><I n="clear" /></ToolButton><ToolButton aria-label="Columns"><I n="table" /></ToolButton>
            </Tools>
            <Tree>
              <TreeRow><Expander open /><I n="folder" /><TreeText>Product/Services</TreeText></TreeRow>
              {folders.map(f => (
                <TreeRow key={f} $deep>{f === "Test" ? <Slot /> : <Expander />}<I n="folder" /><TreeText>{f}</TreeText></TreeRow>
              ))}
              <TreeRow><Expander open /><I n="folder" /><TreeText>Product Erasers</TreeText></TreeRow>
              {erasers.map(([t, c]) => <TreeRow key={t} $deep><Slot /><Swatch $c={c} $line /><TreeText $tight>{t}</TreeText></TreeRow>)}
            </Tree>
            <Tools>
              <ToolButton aria-label="Add"><I n="plus" /></ToolButton><ToolButton aria-label="Remove"><I n="x" /></ToolButton>
              <ToolButton>+</ToolButton><ToolButton>-</ToolButton><FilterInput aria-label="Filter items" />
              <ToolButton aria-label="Clear"><I n="clear" /></ToolButton><ToolButton aria-label="Warnings"><I n="warn" /></ToolButton>
              <Down /><ToolButton aria-label="Columns"><I n="table" /></ToolButton>
            </Tools>
            <GridBox>
              <TableClip>
                <Items>
                  <colgroup><Col $w={120} /><Col $w={75} /><Col $w={66} /></colgroup>
                  <thead><tr><th>Product</th><th>Usage</th><th>Usage 2</th></tr></thead>
                  <tbody>
                    <tr><td><ItemCell><Expander open /><I n="folder" /><TreeText>Project Items</TreeText></ItemCell></td><td /><td /></tr>
                    {items.map(([t, u, v, c, f], i) => (
                      <tr key={i}>
                        <td><ItemCell $deep>{f ? <Expander /> : <Slot />}<Swatch $c={c} $line={f.includes("l")} $dots={f.includes("d")} /><TreeText $tight>{t}</TreeText></ItemCell></td>
                        <td>{u}</td><td>{v}</td>
                      </tr>
                    ))}
                  </tbody>
                </Items>
              </TableClip>
              <Bar $upright><BarEnd><Chev d="up" /></BarEnd><BarThumb $grow={187} /><BarTrack $grow={88} /><BarEnd><Chev /></BarEnd></Bar>
              <Bar><BarEnd><Chev d="left" /></BarEnd><BarThumb $grow={60} /><BarTrack $grow={130} /><BarEnd><Chev d="right" /></BarEnd></Bar>
            </GridBox>
            <Dots />
            {Navs.map(([t, ic]) => <NavButton key={t}><Svg s={22}>{ic}</Svg>{t}</NavButton>)}
            <SideFoot />
          </Sidebar>

          <Work>
            <CanvasRow>
              <CanvasBox><Plan /></CanvasBox>
              <CanvasBar $upright><BarEnd><Chev d="up" /></BarEnd><BarTrack $grow={393} /><BarThumb $grow={46} /><BarTrack $grow={393} /><BarEnd><Chev /></BarEnd></CanvasBar>
            </CanvasRow>
            <SheetRow>
              <SheetTools>
                <Svg s={8}><path d="M1 6L4 2L7 6Z" fill="#111" stroke="none" /></Svg><I n="plus" s={12} /><Svg s={8}><path d="M6 0V8L2 4Z" fill="#111" stroke="none" /></Svg>
              </SheetTools>
              <Sheets>
                {sheets.map(([t, g]) => <Sheet key={t} $grow={g}><span>{t}</span></Sheet>)}
                <Sheet $grow={200} $on><span>1X1 (742SF) A4 HUMBOLDT - ABB</span></Sheet>
              </Sheets>
              <NextSheet aria-label="Next sheet"><Svg s={8}><path d="M2 0V8L6 4Z" fill="#111" stroke="none" /></Svg></NextSheet>
              <SheetBar><BarEnd><Chev d="left" /></BarEnd><BarTrack $grow={54} /><BarThumb $grow={11} /><BarTrack $grow={52} /><BarEnd><Chev d="right" /></BarEnd></SheetBar>
              <SlideBox><Slide type="range" aria-label="Canvas zoom" min={0} max={100} defaultValue={59} /></SlideBox>
            </SheetRow>
            <Status>
              <span>Ready</span>
              <StatusTools>
                <Svg s={14}><path d="M1 7L7 1L13 7M1 13L7 7L13 13" stroke="#222" /></Svg>
                <Svg s={14}><rect x="1" y="1" width="11" height="12" stroke="#222" /></Svg>
              </StatusTools>
            </Status>
          </Work>

          <RightRail>
            <RailHead aria-label="Expand panel"><Svg s={8}><path d="M4 1L1 4L4 7M7 1L4 4L7 7" stroke="#333" strokeWidth="1" /></Svg></RailHead>
            <RailSpace />
            <Dots />
            <RailButton aria-label="Properties"><Svg s={22}><path d="M1 1H21V21H1Z" fill="#fff" stroke={slate} /><path d="M1 1H21V5H1ZM3 9H11V17H3Z" fill="#8156a6" stroke="none" /><path d="M13 9H20M13 12H20M13 15H20M13 18H20" stroke="#777" strokeWidth="1" /></Svg></RailButton>
            <RailButton aria-label="Run panel"><Svg s={22}><path d="M1 1H21V21H1Z" fill="#fff" stroke={slate} /><path d="M1 1H21V4H1Z" fill="#5aa864" stroke="none" /><path d="M6 7V18L16 12Z" /></Svg></RailButton>
            <RailButton aria-label="Template panel"><Svg s={22}><path d="M1 1H21V21H1Z" fill="#fff" stroke={slate} /><path d="M1 1H21V4H1Z" fill={navy} stroke="none" /><path d="M7 8H15V18H7ZM9 11H12" strokeWidth="1" /></Svg></RailButton>
            <RailFoot />
          </RightRail>
        </Body>
      </Shell>
    </>
  );
}
